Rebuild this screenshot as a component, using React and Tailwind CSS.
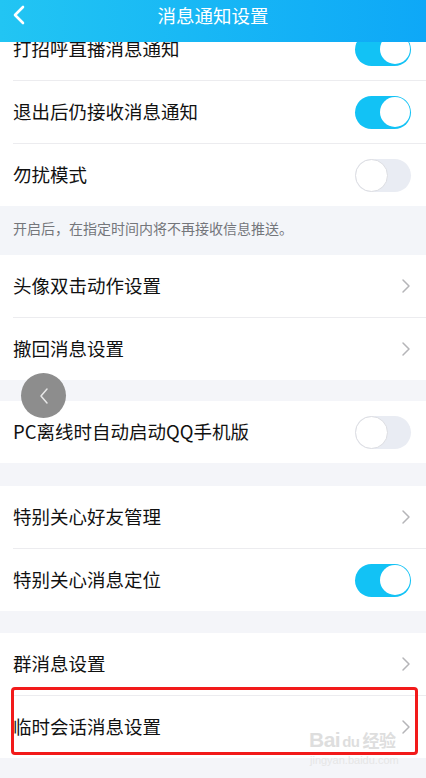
import React from 'react';

const font = { fontFamily: '"Noto Sans CJK SC", "Noto Sans", sans-serif' };

function Toggle({ on }) {
  return on ? (
    <div className="w-[56px] h-[33px] rounded-full bg-[#12c2f5] relative shrink-0">
      <div className="absolute right-[1.5px] top-[1.5px] w-[30px] h-[30px] rounded-full bg-white" />
    </div>
  ) : (
    <div className="w-[56px] h-[33px] rounded-full bg-[#e9ecf3] relative shrink-0">
      <div className="absolute left-0 top-0 w-[33px] h-[33px] rounded-full bg-white border border-[#dcdde2]" />
    </div>
  );
}

function Chevron() {
  return (
    <svg width="10" height="16" viewBox="0 0 10 16" className="shrink-0">
      <polyline points="2,2 8,8 2,14" fill="none" stroke="#b5b5b8" strokeWidth="1.5" strokeLinecap="round" strokeLinejoin="round" />
    </svg>
  );
}

function Row({ label, toggle, divider }) {
  return (
    <div className="bg-white">
      <div className="h-[62px] flex items-center justify-between pl-[13px] pr-[15px]">
        <span className="text-[18.5px] text-[#111]">{label}</span>
        {toggle === undefined ? <Chevron /> : <Toggle on={toggle} />}
      </div>
      {divider && <div className="ml-[13px] h-px bg-[#ececef]" />}
    </div>
  );
}

export default function App() {
  return (
    <div className="w-[426px] h-[778px] overflow-hidden relative bg-[#f4f5f9]" style={font}>
      {/* header */}
      <div className="relative z-10 h-[42px] bg-gradient-to-r from-[#22c5f3] to-[#0ea8f7] flex justify-center pt-[2px]">
        <svg width="14" height="20" viewBox="0 0 14 20" className="absolute left-[12px] top-[5px]">
          <polyline points="11,2 3,10 11,18" fill="none" stroke="#fff" strokeWidth="2.6" strokeLinecap="round" strokeLinejoin="round" />
        </svg>
        <span className="text-white text-[18.5px] leading-[26px]">消息通知设置</span>
      </div>

      <div className="-mt-[24px]">
        <Row label="打招呼直播消息通知" toggle={true} divider />
        <Row label="退出后仍接收消息通知" toggle={true} divider />
        <Row label="勿扰模式" toggle={false} />
        <div className="bg-[#f3f5f9] pl-[13px] pt-[9px] pb-[22px] h-[49px]">
          <span className="text-[14px] text-[#74767b] leading-[18px]">开启后，在指定时间内将不再接收信息推送。</span>
        </div>
        <Row label="头像双击动作设置" divider />
        <Row label="撤回消息设置" />
        <div className="h-[21px]" />
        <Row label="PC离线时自动启动QQ手机版" toggle={false} />
        <div className="h-[23px]" />
        <Row label="特别关心好友管理" divider />
        <Row label="特别关心消息定位" toggle={true} />
        <div className="h-[22px]" />
        <Row label="群消息设置" divider />
        <Row label="临时会话消息设置" />
      </div>

      {/* floating back bubble */}
      <div className="absolute left-[21px] top-[373px] w-[45px] h-[45px] rounded-full bg-[#8d8d8d] flex items-center justify-center">
        <svg width="12" height="20" viewBox="0 0 12 20">
          <polyline points="9,3 3,10 9,17" fill="none" stroke="#e8e8e8" strokeWidth="1.5" strokeLinecap="round" strokeLinejoin="round" />
        </svg>
      </div>

      {/* highlight */}
      <div className="absolute left-[11px] top-[687px] w-[407px] h-[68px] border-[3px] border-[#f21a1a] rounded-[4px]" />

      {/* watermark */}
      <div className="absolute left-[309px] top-[728px] flex flex-col items-start text-[#dedede]" style={{ fontFamily: '"Liberation Sans", "Noto Sans CJK SC", sans-serif' }}>
        <span className="text-[21px] font-bold leading-[24px] tracking-[-0.5px]">Bai<span className="text-[15px] ml-[2px]">du</span><span className="text-[17px] ml-[3px]" style={font}>经验</span></span>
        <span className="text-[11px] leading-[13px] ml-[1px] text-[#e6e6e6]">jingyan.baidu.com</span>
      </div>
    </div>
  );
}
